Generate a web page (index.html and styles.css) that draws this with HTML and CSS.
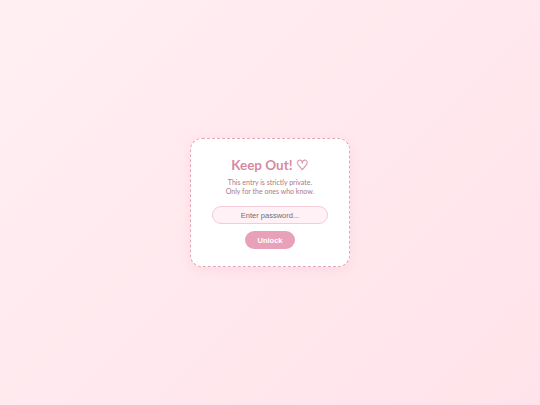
FILE: index.html
```html
<!DOCTYPE html>
<html>
<head>
<meta charset="utf-8">
<link rel="stylesheet" href="styles.css">
</head>
<body>
<main class="page">
  <div class="card">
    <h1 class="title">Keep Out! ♡</h1>
    <p class="sub">This entry is strictly private.<br>Only for the ones who know.</p>
    <input class="pw" type="password" placeholder="Enter password...">
    <button class="btn">Unlock</button>
  </div>
</main>
</body>
</html>
```
FILE: styles.css
```css
html, body {
  margin: 0;
  padding: 0;
  height: 100%;
}
body {
  background: linear-gradient(135deg, #ffeff3 0%, #ffe9ee 50%, #ffe3ea 100%);
  font-family: "Lato", "Liberation Sans", sans-serif;
}
.page {
  height: 100vh;
  display: flex;
  align-items: center;
  justify-content: center;
}
.card {
  box-sizing: border-box;
  width: 160px;
  height: 129px;
  background: #fff;
  border: 1px dashed #e7a5b9;
  border-radius: 12px;
  box-shadow: 0 3px 12px rgba(232, 150, 175, 0.18);
  display: flex;
  flex-direction: column;
  align-items: center;
  padding: 18px 21px 0;
}
.title {
  margin: 0;
  font-family: "Lato", sans-serif;
  font-weight: 700;
  font-size: 13.5px;
  line-height: 17px;
  color: #d68aa2;
}
.sub {
  margin: 4px 0 0;
  font-family: "Lato", sans-serif;
  font-size: 7px;
  line-height: 9px;
  color: #a87a8a;
  text-align: center;
}
.pw {
  box-sizing: border-box;
  margin-top: 10px;
  width: 116px;
  height: 18px;
  border: 1px solid #f5cbd7;
  border-radius: 9px;
  background: #fff1f5;
  font-family: "Liberation Sans", Arial, sans-serif;
  font-size: 7.5px;
  color: #666;
  text-align: center;
  padding: 0 8px;
  outline: none;
}
.pw::placeholder {
  color: #6f6f6f;
}
.btn {
  margin-top: 7px;
  width: 50px;
  height: 18px;
  border: none;
  border-radius: 9px;
  background: #e8a1b8;
  color: #fff;
  font-family: "Liberation Sans", Arial, sans-serif;
  font-weight: 700;
  font-size: 7.5px;
  padding: 0;
}
```
